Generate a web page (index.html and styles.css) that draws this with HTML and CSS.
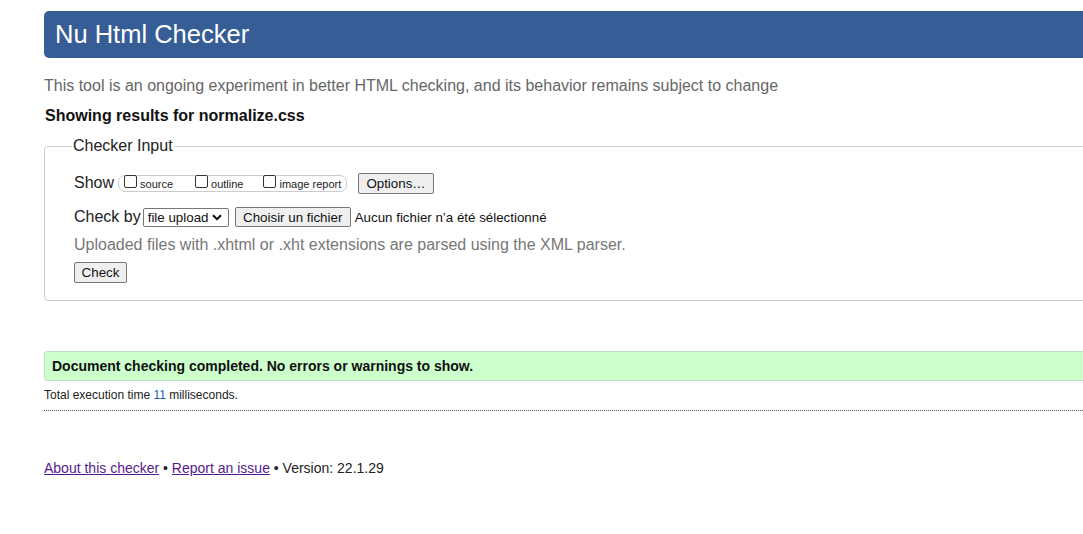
FILE: index.html
```html
<!DOCTYPE html>
<html lang="en">
<head>
<meta charset="utf-8">
<title>Showing results for normalize.css - Nu Html Checker</title>
<link rel="stylesheet" href="styles.css">
</head>
<body>
<div class="page">
  <h1 class="banner">Nu Html Checker</h1>
  <p class="tagline">This tool is an ongoing experiment in better HTML checking, and its behavior remains subject to change</p>
  <p class="results-for">Showing results for normalize.css</p>
  <fieldset class="input-box">
    <legend class="input-legend">Checker Input</legend>
    <div class="row">
      <span class="row-label">Show</span>
      <span class="show-group">
        <label class="opt"><span class="cb"></span>source</label>
        <label class="opt opt-outline"><span class="cb"></span>outline</label>
        <label class="opt opt-image"><span class="cb"></span>image report</label>
      </span>
      <span class="btn btn-options">Options…</span>
    </div>
    <div class="row row-check">
      <span class="row-label">Check by</span>
      <span class="select">file upload<svg class="chev" width="10" height="7" viewBox="0 0 10 7"><path d="M1 1.2 L5 5.2 L9 1.2" fill="none" stroke="#000" stroke-width="2"/></svg></span>
      <span class="btn btn-file">Choisir un fichier</span>
      <span class="nofile">Aucun fichier n’a été sélectionné</span>
    </div>
    <p class="hint">Uploaded files with .xhtml or .xht extensions are parsed using the XML parser.</p>
    <span class="btn btn-check">Check</span>
  </fieldset>
  <div class="success">Document checking completed. No errors or warnings to show.</div>
  <p class="stats">Total execution time <span class="num">11</span> milliseconds.</p>
  <p class="footer"><a class="link" href="#about">About this checker</a> • <a class="link" href="#issue">Report an issue</a> • Version: 22.1.29</p>
</div>
</body>
</html>
```
FILE: styles.css
```css
html, body {
  margin: 0;
  padding: 0;
  background: #fff;
  overflow: hidden;
}
body {
  font-family: "Liberation Sans", Arial, sans-serif;
  color: #222;
}
.page {
  margin-left: 44px;
  margin-right: -40px;
  padding-top: 11px;
}
.banner {
  margin: 0;
  height: 47px;
  box-sizing: border-box;
  padding: 8px 0 0 11px;
  background: #365d95;
  color: #fff;
  font-size: 25.5px;
  font-weight: normal;
  line-height: 30px;
  border-radius: 5px 0 0 5px;
}
.tagline {
  margin: 18px 0 0 0;
  font-size: 16px;
  line-height: 20px;
  color: #666;
}
.results-for {
  margin: 10px 0 0 1px;
  font-size: 16px;
  line-height: 20px;
  font-weight: bold;
  color: #111;
}
.input-box {
  margin: 10px 0 0 0;
  padding: 16px 0 17px 29px;
  border: 1px solid #ccc;
  border-radius: 4px;
  min-width: 0;
}
.input-legend {
  padding: 0 1px;
  margin-left: -2px;
  font-size: 16px;
  line-height: 20px;
  color: #222;
}
.row {
  display: flex;
  align-items: center;
  height: 22px;
  white-space: nowrap;
}
.row-check {
  margin-top: 12px;
}
.row-label {
  font-size: 16px;
  color: #222;
  margin-right: 4px;
  line-height: 20px;
}
.row-check .row-label { margin-right: 2px; }
.show-group {
  display: inline-flex;
  align-items: center;
  flex-shrink: 0;
  height: 17px;
  box-sizing: border-box;
  border: 1px solid #ccc;
  border-radius: 7px;
  padding: 0 5px 0 5px;
  width: 229px;
  font-size: 11px;
  white-space: nowrap;
}
.opt {
  display: inline-flex;
  align-items: center;
  flex-shrink: 0;
  white-space: nowrap;
  color: #222;
  line-height: 13px;
  padding-top: 2px;
}
.opt-outline { margin-left: 22px; }
.opt-image { margin-left: 20px; }
.cb {
  display: inline-block;
  flex-shrink: 0;
  width: 11px;
  height: 11px;
  border: 1px solid #333;
  border-radius: 2px;
  margin-right: 3px;
  margin-top: -5px;
  background: #fff;
}
.btn {
  display: inline-flex;
  align-items: center;
  justify-content: center;
  flex-shrink: 0;
  box-sizing: border-box;
  background: #efefef;
  border: 1px solid #767676;
  border-radius: 2px;
  font-size: 13.33px;
  color: #111;
  white-space: nowrap;
}
.btn-options {
  margin-left: 11px;
  width: 76px;
  height: 21px;
}
.select {
  display: inline-flex;
  align-items: center;
  flex-shrink: 0;
  box-sizing: border-box;
  height: 19px;
  width: 86px;
  border: 1px solid #767676;
  border-radius: 2px;
  padding-left: 4px;
  font-size: 13.33px;
  color: #111;
  background: #fff;
}
.chev { margin-left: 4px; }
.btn-file {
  margin-left: 6px;
  width: 116px;
  height: 20px;
}
.nofile {
  margin-left: 4px;
  font-size: 13.33px;
  color: #111;
}
.hint {
  margin: 7px 0 0 0;
  font-size: 16px;
  line-height: 20px;
  color: #777;
}
.btn-check {
  margin-top: 7px;
  width: 53px;
  height: 21px;
}
.success {
  margin-top: 50px;
  height: 30px;
  box-sizing: border-box;
  padding: 6px 0 0 7px;
  background: #ccffcc;
  border: 1px solid #c7dcc7;
  border-radius: 3px 0 0 3px;
  font-size: 14px;
  line-height: 17px;
  font-weight: bold;
  color: #111;
}
.stats {
  margin: 0;
  padding: 7px 0 8px 0;
  font-size: 12px;
  line-height: 14px;
  color: #222;
  border-bottom: 1px dotted #555;
}
.num { color: #1a5ea8; }
.footer {
  margin: 49px 0 0 0;
  font-size: 14px;
  line-height: 17px;
  color: #222;
}
.link { color: #551a8b; }
```
